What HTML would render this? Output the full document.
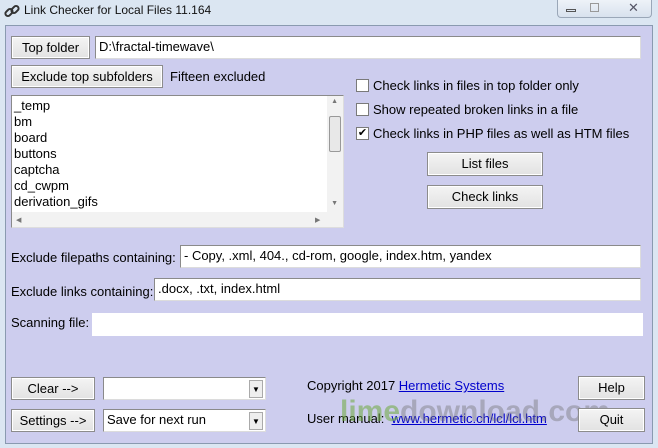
<!DOCTYPE html>
<html><head><style>
*{box-sizing:border-box;margin:0;padding:0}
body{width:658px;height:448px;overflow:hidden;background:#dbe6f2;font-family:"Liberation Sans","DejaVu Sans",sans-serif;font-size:13px;color:#000;position:relative}
.a{position:absolute;white-space:nowrap}
.client{position:absolute;left:5px;top:25px;width:648px;height:419px;background:#cdcdee;border:1px solid #8a9ab0}
.btn{position:absolute;background:linear-gradient(#f4f4f4,#e2e2e2);border:1px solid #8c8c8c;box-shadow:inset 0 0 0 1px #fff;text-align:center;line-height:21px}
.inp{position:absolute;background:#fff;border:1px solid #8a8a8a;border-right-color:#dcdcdc;border-bottom-color:#dcdcdc;padding-left:3px;line-height:20px}
.cb{position:absolute;width:13px;height:13px;background:#fff;border:1px solid #7a7a7a}
.dd{position:absolute;right:2px;top:2px;width:14px;height:18px;background:#eee;border:1px solid #aaa;font-size:8px;text-align:center;line-height:18px}
a{color:#0000cc}
</style></head><body>
<svg class="a" style="left:4px;top:3px" width="16" height="16" viewBox="0 0 16 16"><g fill="none" stroke="#333" stroke-width="2"><rect x="1" y="7" width="8" height="5" rx="2.5" transform="rotate(-45 5 9.5)"/><rect x="7" y="4" width="8" height="5" rx="2.5" transform="rotate(-45 11 6.5)"/></g></svg>
<div class="a" style="left:24px;top:3px;font-size:12px;color:#111">Link Checker for Local Files 11.164</div>
<div class="a" style="left:557px;top:0;width:95px;height:18px;border:1px solid #9aa7b8;border-top:none;border-radius:0 0 4px 4px;background:linear-gradient(#eef3f8,#d8e2ee)"></div>
<div class="a" style="left:566px;top:9px;width:10px;height:3px;border:1px solid #555"></div>
<div class="a" style="left:590px;top:3px;width:9px;height:9px;border:1px solid #999"></div>
<div class="a" style="left:628px;top:0px;font-size:13px;color:#556">✕</div>
<div class="client"></div>
<div class="btn" style="left:11px;top:36px;width:79px;height:23px">Top folder</div>
<div class="inp" style="left:95px;top:36px;width:546px;height:23px">D:\fractal-timewave\</div>
<div class="btn" style="left:11px;top:65px;width:152px;height:23px">Exclude top subfolders</div>
<div class="a" style="left:170px;top:69px">Fifteen excluded</div>
<div class="cb" style="left:356px;top:79px"></div><div class="a" style="left:373px;top:78px">Check links in files in top folder only</div>
<div class="cb" style="left:356px;top:103px"></div><div class="a" style="left:373px;top:102px">Show repeated broken links in a file</div>
<div class="cb" style="left:356px;top:127px;font-size:11px;line-height:11px;text-align:center">✔</div><div class="a" style="left:373px;top:126px">Check links in PHP files as well as HTM files</div>
<div class="btn" style="left:427px;top:152px;width:116px;height:24px">List files</div>
<div class="btn" style="left:427px;top:185px;width:116px;height:24px">Check links</div>
<div class="a" style="left:11px;top:95px;width:333px;height:133px;background:#fff;border:1px solid #8a8a8a;border-right-color:#ddd;border-bottom-color:#ddd">
<div style="padding:2px 0 0 2px;line-height:16px">_temp<br>bm<br>board<br>buttons<br>captcha<br>cd_cwpm<br>derivation_gifs</div>
<div class="a" style="right:0;top:0;width:16px;height:116px;background:#f2f2f2"></div>
<div class="a" style="right:2px;top:20px;width:12px;height:36px;background:#e8e8e8;border:1px solid #999;border-radius:2px"></div>
<div class="a" style="right:5px;top:2px;font-size:7px;color:#777">▲</div>
<div class="a" style="right:5px;top:104px;font-size:7px;color:#777">▼</div>
<div class="a" style="left:0;bottom:0;width:331px;height:15px;background:#f2f2f2"></div>
<div class="a" style="left:4px;bottom:3px;font-size:7px;color:#777">◀</div>
<div class="a" style="left:303px;bottom:3px;font-size:7px;color:#777">▶</div>
</div>
<div class="a" style="left:11px;top:250px">Exclude filepaths containing:</div>
<div class="inp" style="left:180px;top:245px;width:461px;height:23px">- Copy, .xml, 404., cd-rom, google, index.htm, yandex</div>
<div class="a" style="left:11px;top:284px">Exclude links containing:</div>
<div class="inp" style="left:154px;top:278px;width:487px;height:23px">.docx, .txt, index.html</div>
<div class="a" style="left:11px;top:315px">Scanning file:</div>
<div class="inp" style="left:92px;top:313px;width:551px;height:23px;border:1px solid #fff"></div>
<div class="btn" style="left:11px;top:377px;width:84px;height:23px">Clear --&gt;</div>
<div class="inp" style="left:103px;top:377px;width:163px;height:23px"><div class="dd">▼</div></div>
<div class="btn" style="left:11px;top:409px;width:84px;height:23px">Settings --&gt;</div>
<div class="inp" style="left:103px;top:409px;width:163px;height:23px">Save for next run<div class="dd">▼</div></div>
<div class="a" style="left:307px;top:378px">Copyright 2017 <a href="#">Hermetic Systems</a></div>
<div class="a" style="left:307px;top:411px">User manual: &nbsp;<a href="#">www.hermetic.ch/lcl/lcl.htm</a></div>
<div class="a" style="left:340px;top:395px;font-size:30px;font-weight:bold;color:rgba(110,110,110,0.4)"><span style="color:rgba(110,170,60,0.55)">lime</span>download.com</div>
<div class="btn" style="left:578px;top:376px;width:67px;height:24px">Help</div>
<div class="btn" style="left:578px;top:408px;width:67px;height:24px">Quit</div>
</body></html>
